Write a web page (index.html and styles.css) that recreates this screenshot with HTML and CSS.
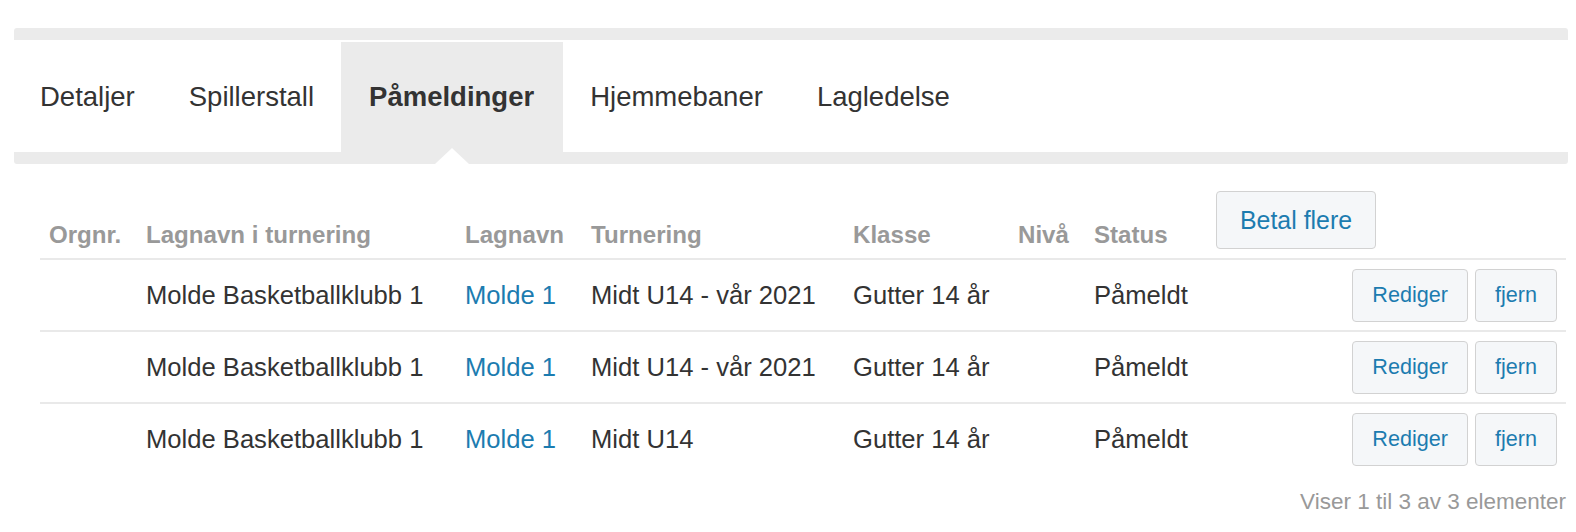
FILE: index.html
```html
<!DOCTYPE html>
<html lang="no">
<head>
<meta charset="utf-8">
<title>Påmeldinger</title>
<link rel="stylesheet" href="styles.css">
</head>
<body>
<div class="page">
  <div class="tabs-panel">
    <div class="band band-top"></div>
    <nav class="tabs">
      <a class="tab">Detaljer</a>
      <a class="tab">Spillerstall</a>
      <a class="tab active">Påmeldinger</a>
      <a class="tab">Hjemmebaner</a>
      <a class="tab">Lagledelse</a>
    </nav>
    <div class="band band-bottom"></div>
  </div>

  <div class="table-wrap">
    <table class="grid">
      <colgroup>
        <col class="c-org"><col class="c-lagtur"><col class="c-lag"><col class="c-tur">
        <col class="c-klasse"><col class="c-niva"><col class="c-status"><col class="c-act">
      </colgroup>
      <thead>
        <tr>
          <th>Orgnr.</th>
          <th>Lagnavn i turnering</th>
          <th>Lagnavn</th>
          <th>Turnering</th>
          <th>Klasse</th>
          <th>Nivå</th>
          <th>Status</th>
          <th class="th-btn"><button class="btn btn-lg">Betal flere</button></th>
        </tr>
      </thead>
      <tbody>
        <tr>
          <td></td>
          <td>Molde Basketballklubb 1</td>
          <td><a class="link">Molde 1</a></td>
          <td>Midt U14 - vår 2021</td>
          <td>Gutter 14 år</td>
          <td></td>
          <td>Påmeldt</td>
          <td class="actions"><div class="btns"><button class="btn">Rediger</button><button class="btn">fjern</button></div></td>
        </tr>
        <tr>
          <td></td>
          <td>Molde Basketballklubb 1</td>
          <td><a class="link">Molde 1</a></td>
          <td>Midt U14 - vår 2021</td>
          <td>Gutter 14 år</td>
          <td></td>
          <td>Påmeldt</td>
          <td class="actions"><div class="btns"><button class="btn">Rediger</button><button class="btn">fjern</button></div></td>
        </tr>
        <tr>
          <td></td>
          <td>Molde Basketballklubb 1</td>
          <td><a class="link">Molde 1</a></td>
          <td>Midt U14</td>
          <td>Gutter 14 år</td>
          <td></td>
          <td>Påmeldt</td>
          <td class="actions"><div class="btns"><button class="btn">Rediger</button><button class="btn">fjern</button></div></td>
        </tr>
      </tbody>
    </table>
    <div class="info">Viser 1 til 3 av 3 elementer</div>
  </div>
</div>
</body>
</html>
```

FILE: styles.css
```css
html, body {
  margin: 0;
  padding: 0;
  background: #ffffff;
}

body {
  font-family: "Liberation Sans", Arial, Helvetica, sans-serif;
  color: #333333;
}

.page {
  padding: 28px 8px 0 14px;
}

.tabs-panel {
  display: flex;
  flex-direction: column;
}

.band {
  height: 12px;
  background: #ebebeb;
}

.band-top {
  border-radius: 3px 3px 0 0;
}

.band-bottom {
  border-radius: 0 0 3px 3px;
}

.tabs {
  display: flex;
  height: 110px;
  margin-top: 2px;
}

.tab {
  display: flex;
  align-items: center;
  padding: 0 27px;
  font-size: 27.5px;
  color: #333333;
  position: relative;
  cursor: pointer;
}

.tab:first-child {
  padding-left: 26px;
}

.tab.active {
  background: #ebebeb;
  font-weight: bold;
  padding: 0 29px 0 28px;
}

.tab.active::after {
  content: "";
  position: absolute;
  left: 50%;
  bottom: -12px;
  transform: translateX(-50%);
  width: 0;
  height: 0;
  border-left: 17px solid transparent;
  border-right: 17px solid transparent;
  border-bottom: 16px solid #ffffff;
}

.table-wrap {
  margin: 19px 2px 0 26px;
}

.grid {
  width: 100%;
  table-layout: fixed;
  border-collapse: separate;
  border-spacing: 0;
}

.c-org { width: 97px; }
.c-lagtur { width: 319px; }
.c-lag { width: 126px; }
.c-tur { width: 262px; }
.c-klasse { width: 165px; }
.c-niva { width: 76px; }
.c-status { width: 122px; }
.c-act { width: auto; }

.grid th {
  text-align: left;
  vertical-align: bottom;
  font-size: 24.1px;
  font-weight: bold;
  color: #999999;
  line-height: 34px;
  padding: 8px 9px 6px;
  border-bottom: 2px solid #e9e9e9;
  white-space: nowrap;
}

.grid td {
  font-size: 25.6px;
  line-height: 34px;
  color: #333333;
  padding: 8.5px 9px;
  vertical-align: middle;
  white-space: nowrap;
}

.grid tbody tr + tr td {
  border-top: 2px solid #e9e9e9;
}

.link {
  color: #1c7cb0;
  text-decoration: none;
}

.btn {
  box-sizing: border-box;
  height: 53px;
  padding: 0 19px;
  font-family: "Liberation Sans", Arial, Helvetica, sans-serif;
  font-size: 21.6px;
  color: #1c7cb0;
  background: #f5f7f9;
  border: 1.5px solid #d2d2d2;
  border-radius: 4px;
  cursor: pointer;
}

.btn-lg {
  height: 58px;
  padding: 0 23px;
  font-size: 24.9px;
  margin-bottom: 3px;
  display: block;
}

.actions {
  padding-right: 8px;
}

.btns {
  display: flex;
  justify-content: flex-end;
  gap: 7px;
}

.info {
  text-align: right;
  font-size: 22.5px;
  line-height: 34px;
  color: #999999;
  padding-top: 11px;
}
```
